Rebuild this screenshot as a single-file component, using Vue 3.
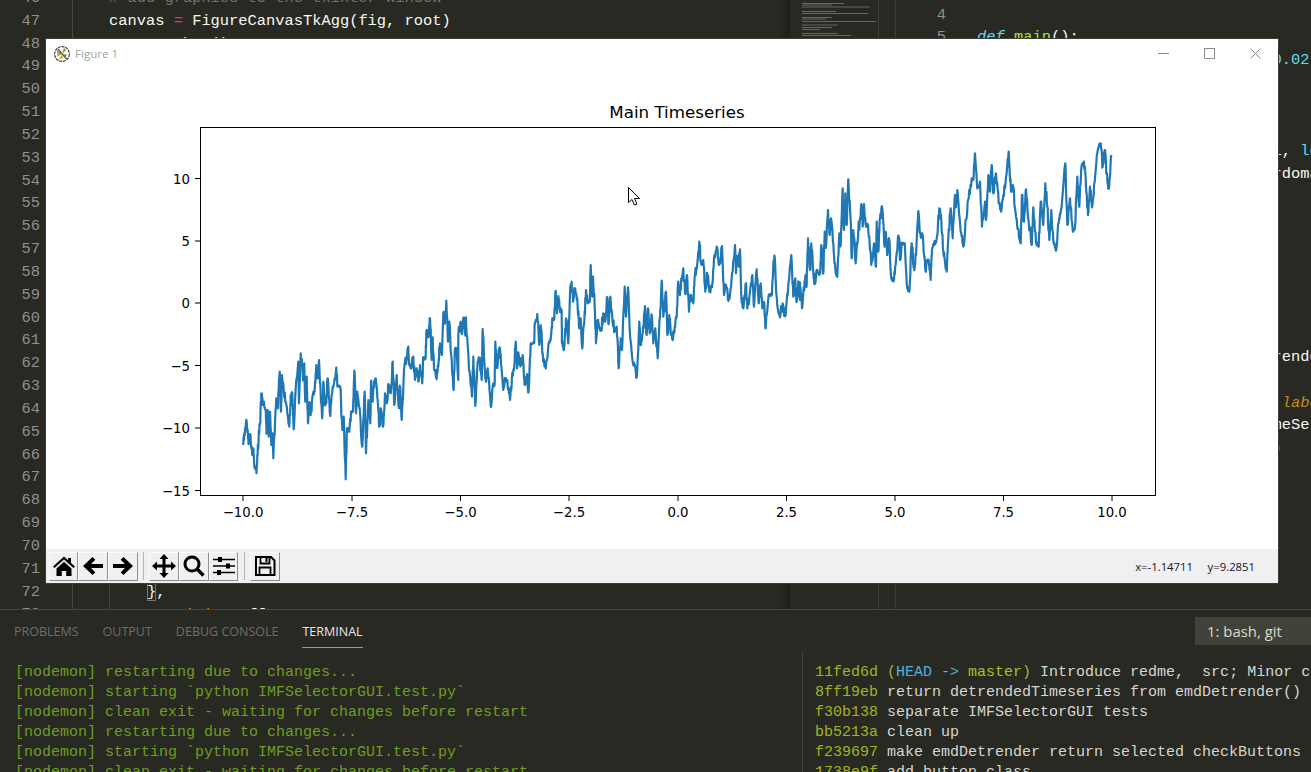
<script setup>
const lineNumbers = Array.from({ length: 28 }, (_, i) => 46 + i)

const leftCode = [
  [{ c: 'cm', t: '# add graphics to the tkinter window' }],
  [{ c: 'w', t: 'canvas ' }, { c: 'op', t: '=' }, { c: 'w', t: ' FigureCanvasTkAgg(fig, root)' }],
  [{ c: 'w', t: 'canvas.show()' }]
]

const rightLines = [
  { n: 4, parts: [] },
  { n: 5, parts: [{ c: 'kw', t: 'def' }, { c: 'w', t: ' ' }, { c: 'fn', t: 'main' }, { c: 'w', t: '():' }] },
  { n: 6, parts: [{ c: 'w', t: '    timeseries = np.arange(-10, ' }, { c: 'blue', t: '0.02' }] },
  { n: 7, parts: [] }, { n: 8, parts: [] }, { n: 9, parts: [] },
  { n: 10, parts: [{ c: 'w', t: '    noise = np.random.normal(0, 1, ' }, { c: 'blue', t: 'lo' }] },
  { n: 11, parts: [{ c: 'w', t: '    trend = np.cumsum(np.random.rdomain' }] },
  { n: 12, parts: [] }, { n: 13, parts: [] }, { n: 14, parts: [] }, { n: 15, parts: [] },
  { n: 16, parts: [] }, { n: 17, parts: [] }, { n: 18, parts: [] },
  { n: 19, parts: [{ c: 'w', t: '    detrendedSeries = module.Detrender' }] },
  { n: 20, parts: [] },
  { n: 21, parts: [{ c: 'w', t: '    plot.figure(series1, noise1, ' }, { c: 'lab', t: 'label' }] },
  { n: 22, parts: [{ c: 'w', t: '    plot.plot(xAxis, detrendedTimeSeries' }] },
  { n: 23, parts: [{ c: 'w', t: '    plot.show(                  ' }, { c: 'or', t: ')' }] }
]

const traces = [
  { x0: 200, y0: 280, pts: [130,495,133,460,138,425,143,450,146,490,150,462,153,495,157,525,160,505,163,560,169,572,172,525,176,470,180,430,184,340,188,375,192,365,197,390,200,460,203,390,206,470,210,395,214,495,218,460,220,535,225,430,229,355,234,380,239,275,243,395,246,285,250,310,256,365,262,400,268,440,272,345,277,340,281,448,288,310,295,245,297,370,302,220,306,250,310,300,313,250,316,365,320,290,324,430,328,370,332,405,338,345,344,335,349,255,353,295,357,240,362,340,367,415,370,305,374,375,379,370,383,295,391,408,398,320,408,270,413,320,421,320,427,450,431,410,437,598,441,445,448,455,453,395,459,395,463,272,468,400,472,335,478,380,487,500,494,335,498,520,505,360,511,430,513,305,518,365,522,315,527,295,533,360,538,440,543,385,549,440,555,340,561,370,565,312,572,340,578,245,583,375,590,285,597,385,600,320,605,420,612,270,620,232,624,205,628,255,634,265,640,230,645,300,650,265,655,305,660,255,667,310,670,235,677,235,679,155,686,170,690,115,695,240,698,172,703,270,709,290,715,260,720,190,725,225,730,100,735,130,739,62,744,185,748,125,755,240,761,330,765,205,770,205,775,300,775,165,782,125,785,160,790,115,796,165,798,120,807,270,816,350,820,230,826,378,833,245,838,235,845,300,848,147,853,240,858,305,863,265,872,378,878,320,884,310,886,185,892,265,898,205] },
  { x0: 500, y0: 180, pts: [0,505,5,570,10,630,16,595,22,600,30,660,36,590,42,570,47,485,51,565,56,525,62,555,68,525,74,615,80,590,86,630,92,490,102,490,105,430,112,402,118,495,122,435,128,520,137,565,147,485,152,480,157,415,162,420,166,338,171,400,176,355,180,395,185,390,186,490,192,510,198,415,205,490,210,340,215,305,219,365,224,325,232,355,238,445,242,415,247,505,253,425,258,330,263,370,269,365,272,255,277,350,279,290,283,340,288,490,293,420,298,445,304,450,310,400,316,425,322,352,325,430,330,355,336,400,344,455,350,440,356,565,362,475,366,510,374,320,378,410,384,322,390,465,398,545,404,555,410,592,418,425,422,495,428,460,435,378,440,465,444,385,449,460,456,410,460,490,466,445,473,535,480,410,485,302,490,410,498,335,502,465,508,405,512,460,518,480,524,440,530,410,535,305,540,345,544,295,550,265,555,340,561,285,567,395,572,345,580,370,585,285,592,250,598,185,603,250,610,240,616,335,622,285,628,335,636,322,642,235,650,200,656,255,661,250,666,198,672,345,678,315,684,360,690,345,698,275,705,195,708,280,712,235,716,260,720,208,724,350,730,385,738,310,742,385,750,335,757,285,762,380,770,268,776,370,782,310,788,385,793,370,797,445,806,345,815,345,820,255,824,232,830,350,840,412,848,370,856,408,863,345,874,225,880,350,886,295,890,365,896,310,900,360] },
  { x0: 800, y0: 130, pts: [0,465,6,535,12,475,16,440,20,465,24,325,30,420,34,340,40,425,44,460,50,420,60,430,64,345,70,430,74,305,78,350,84,240,88,310,93,265,100,340,106,415,112,440,118,310,122,345,128,175,132,300,136,190,140,285,145,148,152,270,155,385,160,300,167,400,176,275,178,300,184,222,188,290,192,222,198,290,204,285,214,405,222,340,228,410,230,275,235,365,240,265,247,235,254,350,258,310,262,375,268,330,274,445,282,450,288,390,294,320,298,325,300,390,306,340,314,340,320,460,328,485,335,340,342,415,348,375,355,243,362,320,368,315,376,420,384,395,392,450,396,360,402,345,410,325,418,235,424,270,430,365,436,405,440,425,445,325,452,235,458,325,465,195,468,232,473,188,484,310,490,350,498,270,506,205,515,145,520,150,525,70,532,175,540,155,546,290,555,215,558,270,565,135,570,185,575,105,580,190,588,130,596,220,603,245,610,195,618,140,626,65,633,185,640,170,648,260,654,295,662,340,666,195,672,275,678,178,686,275,695,345,700,232,708,335,716,350,722,215,730,285,736,160,742,230,748,330,754,240,760,330,768,362,776,280,782,245,796,100,802,285,810,205,818,300,825,290,832,140,838,230,844,115,852,95,858,170,864,255,870,170,876,232,884,155,892,70,902,40,908,110,914,60,920,130,926,170,930,140,934,75] }
]

// Plot coordinates are relative to the figure window (origin 46,39).
const traced = traces.flatMap(({ x0, y0, pts }) => {
  const out = []
  for (let i = 0; i < pts.length; i += 2) {
    out.push([x0 + pts[i] / 3 - 46, y0 + pts[i + 1] / 3 - 39])
  }
  return out
})

// The source has about 1000 samples: fill the traced envelope with small seeded zigzags.
const seeded = (i) => {
  const v = Math.sin(i * 12.9898) * 43758.5453
  return (v - Math.floor(v)) * 2 - 1
}
const seriesPoints = traced
  .flatMap((p, i) => {
    const q = traced[i + 1]
    if (!q) return [p]
    const dy = q[1] - p[1]
    const spread = Math.min(6, 0.3 * Math.abs(dy) + 1.5)
    const steps = [0.2, 0.4, 0.6, 0.8]
    return [
      p,
      ...steps.map((t, k) => [p[0] + (q[0] - p[0]) * t, p[1] + dy * t + seeded(i + k * 0.25) * spread])
    ]
  })
  .map(([x, y]) => `${x.toFixed(1)},${y.toFixed(1)}`)
  .join(' ')

const xTicks = [
  { x: 197, label: '−10.0' }, { x: 306, label: '−7.5' }, { x: 414.5, label: '−5.0' },
  { x: 523, label: '−2.5' }, { x: 632, label: '0.0' }, { x: 740.5, label: '2.5' },
  { x: 849, label: '5.0' }, { x: 957.5, label: '7.5' }, { x: 1066, label: '10.0' }
]
const yTicks = [
  { y: 139.5, label: '10' }, { y: 202, label: '5' }, { y: 264, label: '0' },
  { y: 326.5, label: '−5' }, { y: 389, label: '−10' }, { y: 451.5, label: '−15' }
]

const termLines = [
  '[nodemon] restarting due to changes...',
  '[nodemon] starting `python IMFSelectorGUI.test.py`',
  '[nodemon] clean exit - waiting for changes before restart',
  '[nodemon] restarting due to changes...',
  '[nodemon] starting `python IMFSelectorGUI.test.py`',
  '[nodemon] clean exit - waiting for changes before restart'
]
const headMessage = ' Introduce redme,  src; Minor code cleanup'
const gitLines = [
  ['8ff19eb', ' return detrendedTimeseries from emdDetrender()'],
  ['f30b138', ' separate IMFSelectorGUI tests'],
  ['bb5213a', ' clean up'],
  ['f239697', ' make emdDetrender return selected checkButtons'],
  ['1738e9f', ' add button class']
]

const miniRows = [
  [3, 42], [4.5, 30], [6.5, 68], [11, 34], [13, 66], [17, 30], [18.6, 24], [21, 74],
  [24.5, 36], [27, 30], [29, 18], [33, 36], [35, 49], [39, 20]
]
</script>

<template>
  <div class="ide">
    <div class="workspace">
      <section class="left-editor">
        <div class="gutter">
          <div v-for="n in lineNumbers" :key="n" class="ln">{{ n }}</div>
        </div>
        <div class="guide guide-a"></div>
        <div class="guide guide-b"></div>
        <div class="code">
          <div v-for="(line, i) in leftCode" :key="i" class="code-line">
            <span v-for="(p, j) in line" :key="j" :class="p.c">{{ p.t }}</span>
          </div>
          <div class="code-spacer"></div>
          <div class="code-line brace-line"><span class="brace w">}</span><span class="w">,</span></div>
          <div class="code-line pos-line"><span class="or">Position</span><span class="w">: []</span></div>
        </div>
      </section>
      <aside class="minimap">
        <svg width="87" height="48" viewBox="0 0 87 48" aria-hidden="true">
          <rect v-for="(r, i) in miniRows" :key="i" x="12" :y="r[0]" :width="r[1]" height="1" fill="#66675f" />
        </svg>
      </aside>
      <section class="right-editor">
        <div v-for="l in rightLines" :key="l.n" class="r-line">
          <span class="r-num">{{ l.n }}</span>
          <span class="r-code"><span v-for="(p, j) in l.parts" :key="j" :class="p.c">{{ p.t }}</span></span>
        </div>
      </section>
    </div>

    <div class="panel">
      <div class="tabs">
        <span class="tab">PROBLEMS</span>
        <span class="tab">OUTPUT</span>
        <span class="tab">DEBUG CONSOLE</span>
        <span class="tab active">TERMINAL</span>
        <span class="term-select">1: bash, git</span>
      </div>
      <div class="terminals">
        <div class="term term-left">
          <div v-for="(t, i) in termLines" :key="i" class="t-line nod">{{ t }}</div>
        </div>
        <div class="term term-right">
          <div class="t-line"><span class="hash">11fed6d</span>{{ ' ' }}<span class="paren">(</span><span class="head">HEAD -&gt;{{ ' ' }}</span><span class="master">master</span><span class="paren">)</span>{{ headMessage }}</div>
          <div v-for="g in gitLines" :key="g[0]" class="t-line"><span class="hash">{{ g[0] }}</span>{{ g[1] }}</div>
        </div>
      </div>
    </div>

    <div class="figure">
      <div class="titlebar">
        <svg class="app-icon" width="18" height="18" viewBox="0 0 18 18" aria-hidden="true">
          <circle cx="9" cy="9" r="7.4" fill="#fff" stroke="#333" stroke-width="1.1" stroke-dasharray="3 .8" />
          <path d="M4 4.500 9 9l-4.500 2.500z" fill="#a9a24a" />
          <path d="M9 9l2-6 2 2zM9 9l5 .5-1.500 2.500z" fill="#8c8a44" />
          <path d="M5 4 13.500 14" stroke="#6d5a2a" stroke-width="1.300" />
          <path d="M9 9 6 14l4-.5z" fill="#c8b04a" />
        </svg>
        <span class="fig-title">Figure 1</span>
        <div class="controls">
          <svg width="11" height="11" viewBox="0 0 11 11" aria-hidden="true"><path d="M0 5.500h11" stroke="#8c8c8c" /></svg>
          <svg width="11" height="11" viewBox="0 0 11 11" aria-hidden="true"><rect x=".5" y=".5" width="10" height="10" fill="none" stroke="#8c8c8c" /></svg>
          <svg width="11" height="11" viewBox="0 0 11 11" aria-hidden="true"><path d="M.5.500l10 10M10.500.500l-10 10" stroke="#8c8c8c" /></svg>
        </div>
      </div>

      <svg class="plot" width="1232" height="496" viewBox="0 0 1232 496">
        <text x="631" y="79" class="plot-title" text-anchor="middle">Main Timeseries</text>
        <clipPath id="axes-clip"><rect x="154.500" y="88.500" width="955" height="368" /></clipPath>
        <polyline :points="seriesPoints" fill="none" stroke="#1f77b4" stroke-width="2.200" stroke-linejoin="round" clip-path="url(#axes-clip)" />
        <rect x="154.500" y="88.500" width="955" height="368" fill="none" stroke="#000" stroke-width="1" />
        <g v-for="t in xTicks" :key="t.label">
          <path :d="`M${t.x} 457v5`" stroke="#000" />
          <text :x="t.x" y="478" class="tick" text-anchor="middle">{{ t.label }}</text>
        </g>
        <g v-for="t in yTicks" :key="t.label">
          <path :d="`M154 ${t.y}h-5`" stroke="#000" />
          <text x="144" :y="t.y + 5" class="tick" text-anchor="end">{{ t.label }}</text>
        </g>
      </svg>

      <div class="toolbar">
        <button class="tb">
          <svg width="24" height="22" viewBox="0 0 24 22" aria-hidden="true">
            <path d="M12 1.500 1 11.500l1.500 1.500L12 4.500l9.500 8.500 1.500-1.500-4-3.600V3h-3v2.300z" fill="#000" />
            <path d="M4.500 13.500 12 6.800l7.500 6.700V21h-5.300v-5h-4.400v5H4.500z" fill="#000" />
          </svg>
        </button>
        <button class="tb">
          <svg width="24" height="22" viewBox="0 0 24 22" aria-hidden="true"><path d="M11.500 2 2 11l9.500 9 2.800-2.800-4.300-4.200H22V9H10l4.300-4.200z" fill="#000" /></svg>
        </button>
        <button class="tb">
          <svg width="24" height="22" viewBox="0 0 24 22" aria-hidden="true"><path d="M12.500 2 22 11l-9.500 9-2.800-2.800 4.300-4.200H2V9h12L9.700 4.800z" fill="#000" /></svg>
        </button>
        <span class="sep"></span>
        <button class="tb">
          <svg width="26" height="24" viewBox="0 0 26 24" aria-hidden="true"><path d="M13 0l4.500 5H14.500v5.500H20V7.500l5 4.500-5 4.500v-3h-5.500V19h3L13 24l-4.500-5h3v-5.500H6v3L1 12l5-4.500v3h5.500V5h-3z" fill="#000" /></svg>
        </button>
        <button class="tb">
          <svg width="24" height="24" viewBox="0 0 24 24" aria-hidden="true"><circle cx="10" cy="10" r="7" fill="none" stroke="#000" stroke-width="3" /><path d="M15 15l6.500 6.500" stroke="#000" stroke-width="3.400" /></svg>
        </button>
        <button class="tb">
          <svg width="24" height="22" viewBox="0 0 24 22" aria-hidden="true">
            <path d="M1 4.500h22M1 11h22M1 17.500h22" stroke="#000" stroke-width="1.500" />
            <rect x="6" y="2" width="4" height="5" fill="#000" /><rect x="14" y="8.500" width="4" height="5" fill="#000" /><rect x="5" y="15" width="4" height="5" fill="#000" />
          </svg>
        </button>
        <span class="sep"></span>
        <button class="tb">
          <svg width="22" height="22" viewBox="0 0 22 22" aria-hidden="true">
            <path d="M2 2h15l3.500 3.500V20H2z" fill="none" stroke="#000" stroke-width="2" />
            <path d="M6.500 2v6.500h9V2" fill="none" stroke="#000" stroke-width="1.800" />
            <rect x="11.500" y="3" width="2" height="4" fill="#000" />
            <path d="M5.500 20v-7.500h11V20" fill="none" stroke="#000" stroke-width="1.800" />
          </svg>
        </button>
        <span class="coords">{{ 'x=-1.14711     y=9.2851' }}</span>
      </div>

      <svg class="cursor" width="13" height="20" viewBox="0 0 13 20" aria-hidden="true">
        <path d="M.5.500v15l3.500-3 2.500 5.500 2.500-1-2.500-5.500h5z" fill="#fff" stroke="#000" stroke-width="1" />
      </svg>
    </div>
  </div>
</template>

<style>
html, body { margin: 0; padding: 0; background: #282923; overflow: hidden; }
</style>

<style scoped>
.ide { position: relative; width: 1311px; height: 772px; overflow: hidden; background: #282923; font-family: "Liberation Mono", monospace; }
.workspace { display: flex; height: 609px; overflow: hidden; }
.left-editor { position: relative; width: 789px; flex: none; display: flex; overflow: hidden; border-right: 1px solid #1e1f1b; background: linear-gradient(to right, #282923 779px, #1f201b 789px); }
.gutter { width: 109px; flex: none; margin-top: -13px; }
.ln { width: 40px; height: 22.84px; line-height: 22.84px; text-align: right; color: #8f908a; font-size: 15.4px; }
.guide { position: absolute; top: 0; bottom: 0; width: 1px; background: #464741; }
.guide-a { left: 72px; }
.guide-b { left: 109px; top: 583px; }
.code { flex: 1; margin-top: -13px; font-size: 15.4px; }
.code-line { height: 22.84px; line-height: 22.84px; white-space: pre; }
.code-spacer { height: 525.32px; }
.brace-line { padding-left: 38px; }
.brace { display: inline-block; height: 18px; line-height: 18px; outline: 1px solid #77786f; outline-offset: -1px; }
.pos-line { padding-left: 48px; }
.w { color: #f8f8f2; }
.cm { color: #75715e; }
.op { color: #f92672; }
.kw { color: #66d9ef; font-style: italic; }
.fn { color: #a6e22e; }
.blue { color: #66d9ef; }
.lab { color: #c08a1e; font-style: italic; }
.or { color: #e0931f; }
.minimap { width: 88px; flex: none; border-right: 1px solid #3d3e38; background: #282923; }
.minimap svg { display: block; }
.right-editor { flex: 1; min-width: 0; margin-top: -9px; border-left: 1px solid #3d3e38; margin-left: 16px; padding-top: 10.5px; overflow: hidden; font-size: 15.4px; transform: translateY(1.5px); }
.r-line { display: flex; height: 22.84px; line-height: 22.84px; white-space: pre; }
.r-num { width: 50px; text-align: right; color: #8f908a; flex: none; }
.r-code { margin-left: 31px; }
.panel { height: 163px; box-sizing: border-box; border-top: 1px solid #45463f; display: flex; flex-direction: column; }
.tabs { position: relative; display: flex; gap: 24px; height: 41px; flex: none; padding: 13px 0 0 14px; box-sizing: border-box; font-family: "Open Sans", sans-serif; font-size: 12.500px; }
.tab { color: #6e6e68; line-height: 17px; height: 25px; box-sizing: border-box; white-space: nowrap; }
.tab.active { color: #e7e7e7; border-bottom: 1px solid #9a9a95; }
.term-select { position: absolute; left: 1195px; top: 7px; width: 116px; height: 28px; background: #414339; color: #d8d8d2; font-size: 14.900px; line-height: 28px; padding-left: 12px; box-sizing: border-box; }
.terminals { flex: 1; display: flex; overflow: hidden; }
.term { font-size: 15px; }
.term-left { width: 802px; flex: none; padding: 12px 0 0 15px; box-sizing: border-box; }
.term-right { flex: 1; min-width: 0; border-left: 1px solid #45463f; padding: 12px 0 0 12px; color: #d6d6d0; overflow: hidden; }
.t-line { height: 20px; line-height: 20px; white-space: pre; }
.nod { color: #6f9d20; }
.hash { color: #a3b321; }
.paren { color: #a3b321; }
.head { color: #4fb2df; }
.master { color: #a6c41f; }
.figure { position: absolute; left: 46px; top: 39px; width: 1232px; height: 544px; background: #fff; box-shadow: 0 0 0 1px #3a3a36; display: flex; flex-direction: column; }
.titlebar { height: 29px; flex: none; display: flex; align-items: center; padding-left: 7px; box-sizing: border-box; position: relative; }
.app-icon { flex: none; }
.fig-title { margin-left: 4px; font-family: "Open Sans", sans-serif; font-size: 11.600px; color: #9aa79e; }
.controls { margin-left: auto; display: flex; gap: 35px; padding-right: 17px; }
.controls svg { display: block; }
.plot { position: absolute; left: 0; top: 0; pointer-events: none; }
.plot-title { font-family: "DejaVu Sans", sans-serif; font-size: 16.700px; fill: #000; }
.tick { font-family: "DejaVu Sans", sans-serif; font-size: 13.300px; fill: #000; }
.toolbar { margin-top: auto; height: 34px; flex: none; background: #f0f0f0; display: flex; align-items: center; padding-left: 2.700px; box-sizing: border-box; }
.tb { width: 29.700px; height: 29px; padding: 0; margin: 0; display: flex; align-items: center; justify-content: center; background: #f0f0f0; border: 1px solid; border-color: #fcfcfc #8f8f8f #8f8f8f #fcfcfc; box-sizing: border-box; flex: none; }
.tb svg { display: block; }
.sep { width: 1px; height: 28px; background: #b5b5b5; margin: 0 5.300px; flex: none; }
.coords { margin-left: auto; padding-right: 23px; font-family: "Open Sans", sans-serif; font-size: 11.300px; color: #14141f; white-space: pre; }
.cursor { position: absolute; left: 582px; top: 148px; }
</style>
